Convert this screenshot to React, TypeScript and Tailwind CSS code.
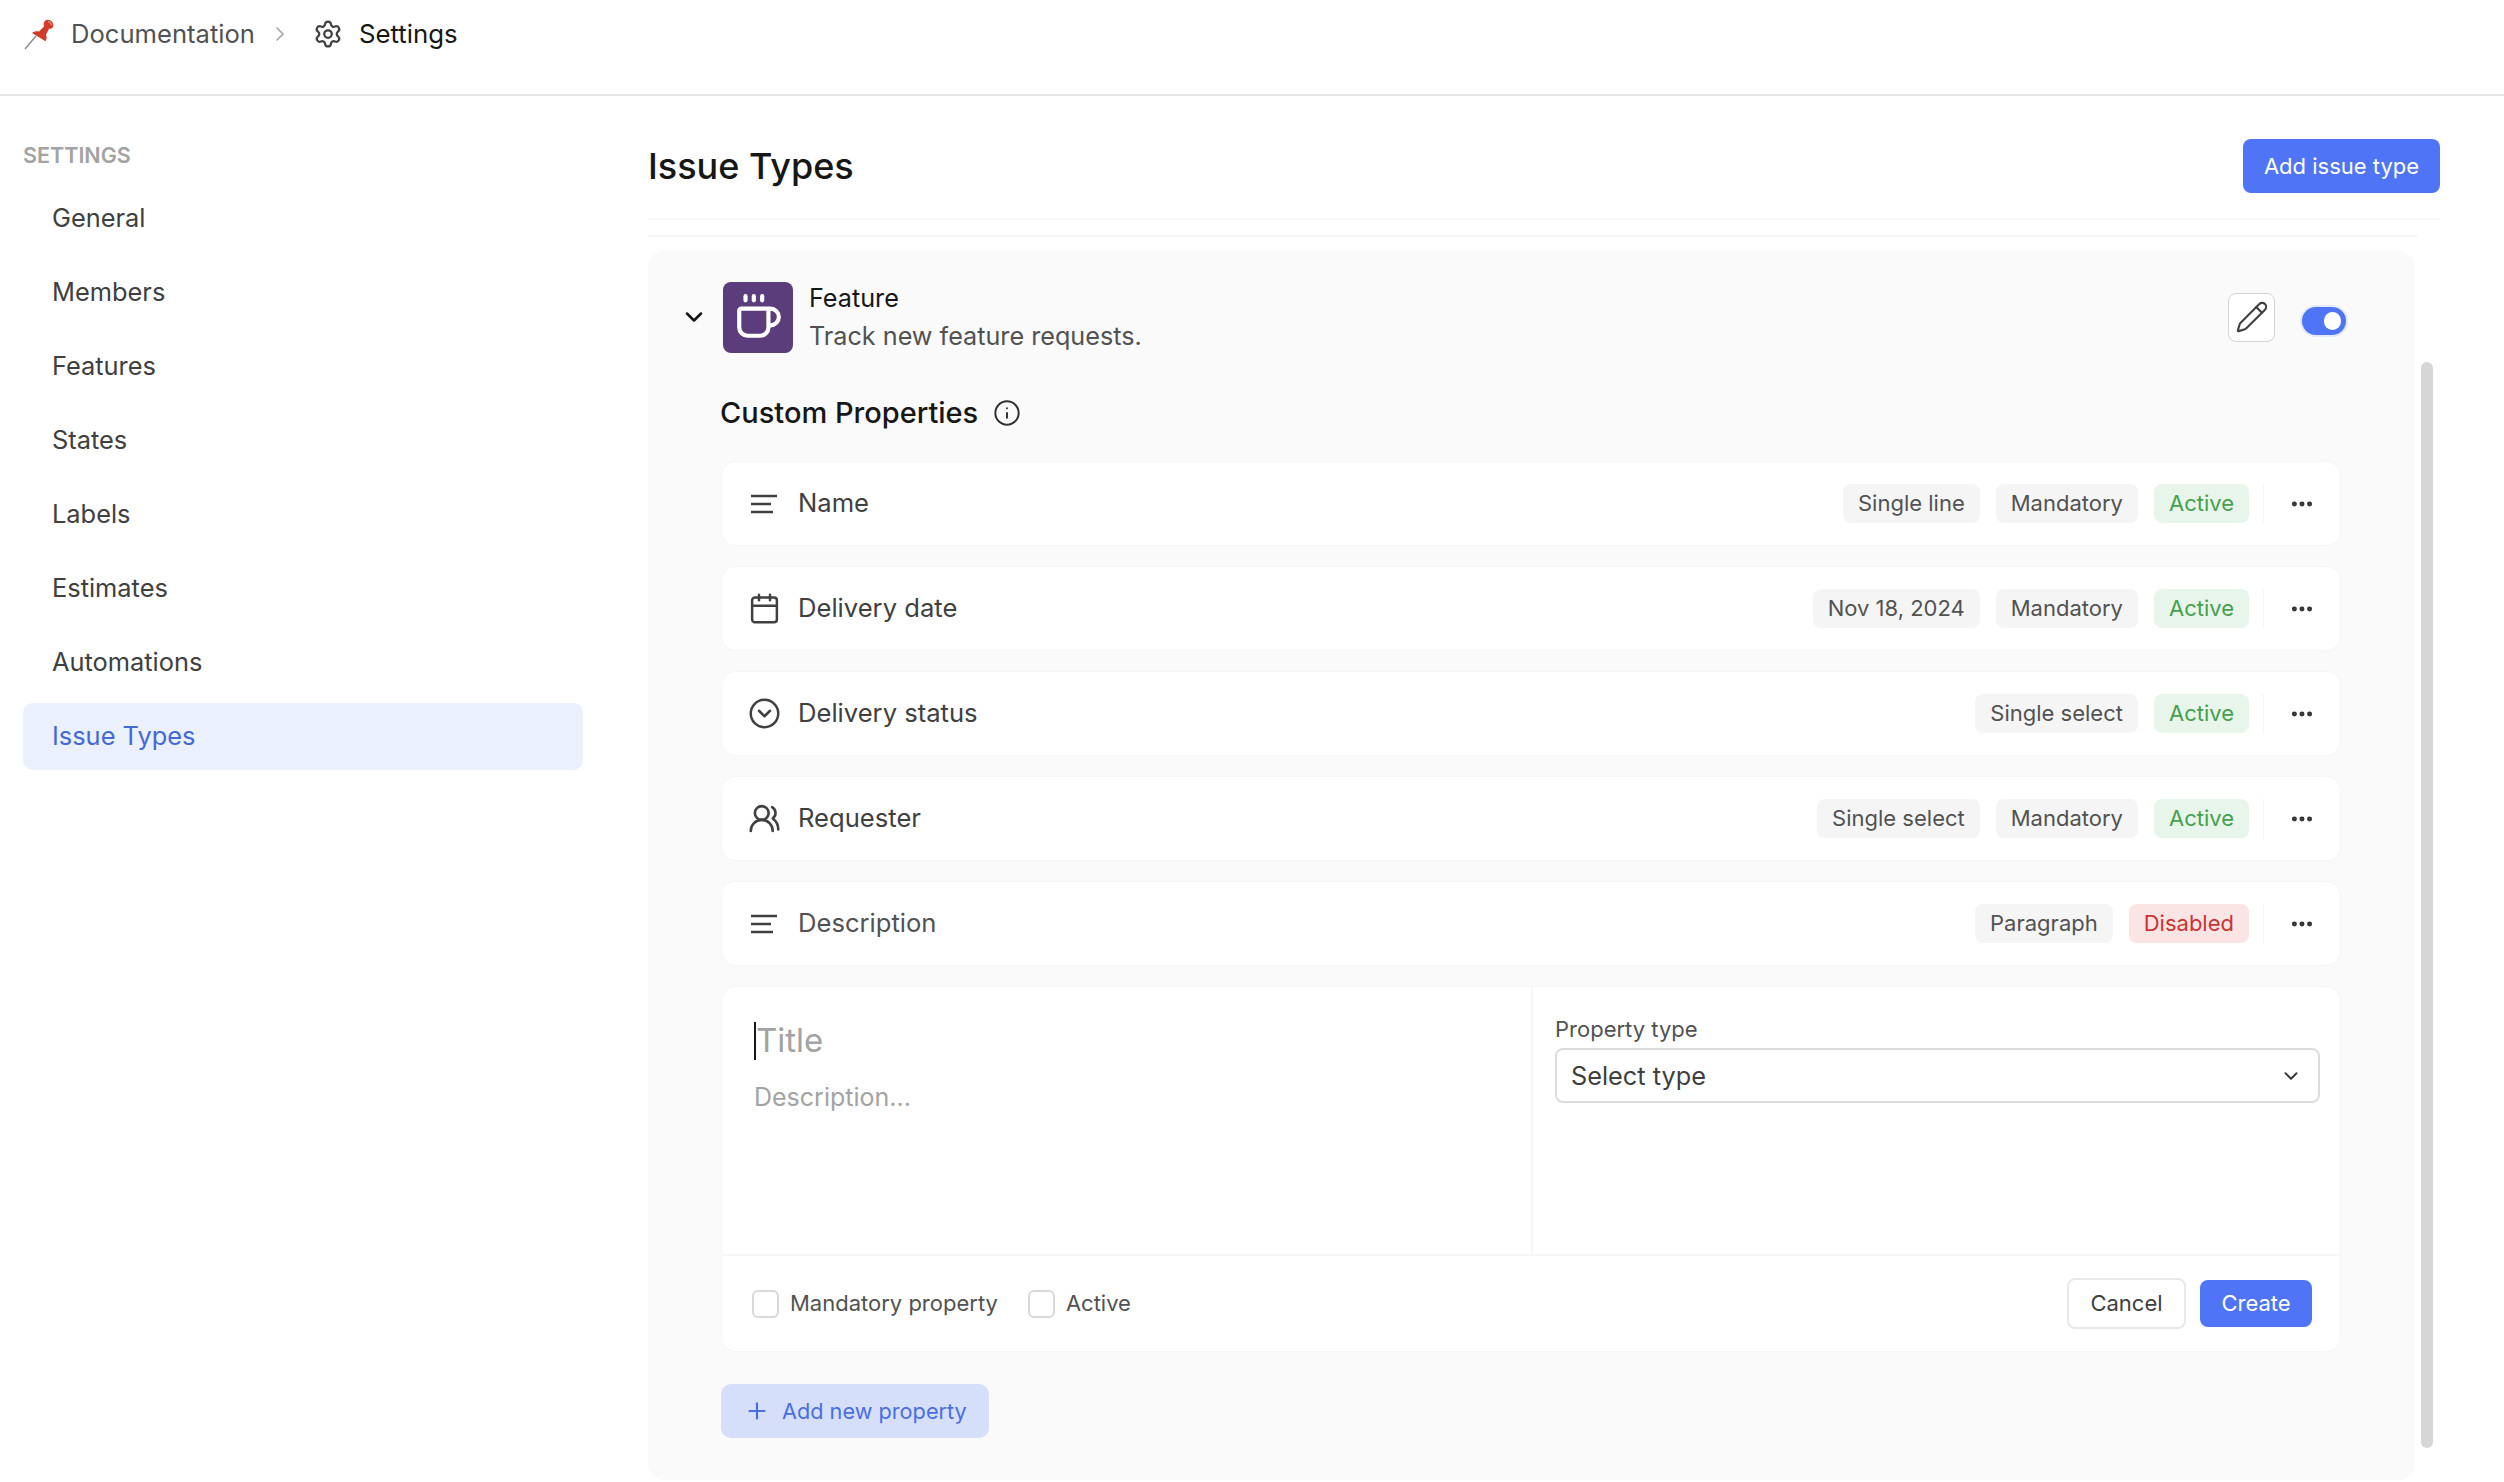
import type { ReactNode } from 'react'
import {
  Calendar,
  ChevronDown,
  ChevronRight,
  CircleChevronDown,
  Coffee,
  Ellipsis,
  Info,
  Pencil,
  Plus,
  Settings,
  UsersRound,
} from 'lucide-react'

const navItems = ['General', 'Members', 'Features', 'States', 'Labels', 'Estimates', 'Automations', 'Issue Types']

function LinesIcon() {
  return (
    <svg width="28" height="20" viewBox="0 0 28 20" fill="none" stroke="#404040" strokeWidth="2.4">
      <path d="M1 2h26M1 10h20M1 18h22" />
    </svg>
  )
}

function PinIcon() {
  return (
    <svg width="32" height="32" viewBox="0 0 32 32" className="shrink-0">
      <path d="M1 31 12 18" stroke="#8a8a8a" strokeWidth="1.4" />
      <path d="M20 4.500c1-2.500 4-3.500 6.500-2 2.500 1.500 3.500 4 2.500 6.500-.8 1.500-2.500 2-4 1.800l-3 6c1 2 .8 4.500-.5 6.500L8 15c2-1.700 4.500-2.200 7-1.500l5-5c-.5-1.500-.5-2.800 0-4Z" fill="#d13b2e" />
      <path d="M24 3.500c2 .5 3.500 2 3.500 4" stroke="#e9806f" strokeWidth="1.400" fill="none" />
    </svg>
  )
}

function Chip({ label, tone = 'gray' }: { label: string; tone?: 'gray' | 'green' | 'red' }) {
  const toneClass =
    tone === 'green'
      ? 'bg-[#e8f5ea] text-[#46a04e]'
      : tone === 'red'
        ? 'bg-[#fae5e4] text-[#c93434]'
        : 'bg-[#f5f5f5] text-[#525252]'
  return (
    <span className={`flex h-[39px] items-center rounded-[8px] px-[15px] text-[22px] ${toneClass}`}>
      {label}
    </span>
  )
}

function PropertyRow({
  icon,
  name,
  chips,
  muted,
}: {
  icon: ReactNode
  name: string
  chips: ReactNode
  muted?: boolean
}) {
  return (
    <div className="flex h-[85px] items-center rounded-[14px] border border-[#f6f6f6] bg-white pl-[28px] pr-[25px]">
      <span className="flex h-[36px] w-[28px] shrink-0 items-center justify-center">{icon}</span>
      <span className={`ml-[20px] text-[25.6px] ${muted ? 'text-[#525252]' : 'text-[#404040]'}`}>{name}</span>
      <div className="ml-auto flex items-center gap-[16px]">{chips}</div>
      <div className="ml-[14px] h-[39px] border-l border-[#f5f5f5]" />
      <Ellipsis size={26} strokeWidth={2.6} className="ml-[25px] text-[#333333]" />
    </div>
  )
}

function Checkbox({ label }: { label: string }) {
  return (
    <label className="flex items-center gap-[11px] text-[22px] text-[#525252]">
      <span className="h-[28px] w-[27px] rounded-[6px] border-2 border-[#d9d9d9] bg-white" />
      {label}
    </label>
  )
}

export default function App() {
  return (
    <div className="h-[1482px] w-[2504px] overflow-hidden bg-white [font-family:Inter,sans-serif]">
      <header className="flex h-[96px] items-start border-b-2 border-[#e5e5e5] pl-[24px] pt-[18px]">
        <PinIcon />
        <span className="ml-[15px] text-[25.6px] leading-[32px] text-[#525252]">Documentation</span>
        <ChevronRight size={24} strokeWidth={1.6} className="ml-[13px] mt-[4px] text-[#a3a3a3]" />
        <Settings size={30} strokeWidth={1.8} className="ml-[21px] mt-[1px] text-[#404040]" />
        <span className="ml-[16px] text-[25.8px] leading-[32px] text-[#171717]">Settings</span>
      </header>

      <div className="flex">
        <aside className="w-[648px] shrink-0 pl-[23px] pt-[47px]">
          <div className="text-[21.5px] font-semibold leading-[24px] text-[#a3a3a3]">SETTINGS</div>
          <nav className="mt-[18px] flex w-[560px] flex-col gap-[7px]">
            {navItems.map((item) => (
              <a
                key={item}
                className={`flex h-[67px] items-center rounded-[10px] pl-[29px] text-[25.4px] ${
                  item === 'Issue Types' ? 'bg-[#eaf0fc] text-[#4568d6]' : 'text-[#404040]'
                }`}
              >
                {item}
              </a>
            ))}
          </nav>
        </aside>

        <main className="w-[1792px] pt-[43px]">
          <div className="flex items-center justify-between border-b-2 border-[#f7f7f7] pb-[25px]">
            <h1 className="text-[36px] font-medium text-[#171717]">Issue Types</h1>
            <button className="h-[54px] w-[197px] rounded-[8px] bg-[#4f75f6] text-[22px] text-white">
              Add issue type
            </button>
          </div>
          <div className="mt-[15px] w-[1769px] border-t-2 border-[#f7f7f7]" />

          <section className="relative mt-[14px] w-[1767px] rounded-[16px] bg-[#fafafa] pb-[42px] pt-[28px]">
            <div className="flex items-center pl-[32px] pr-[69px]">
              <ChevronDown size={28} strokeWidth={2.2} className="text-[#171717]" />
              <div className="ml-[15px] flex h-[71px] w-[70px] items-center justify-center rounded-[8px] bg-[#5a3d7a]">
                <Coffee size={50} strokeWidth={2} className="text-white" />
              </div>
              <div className="ml-[16px]">
                <div className="text-[25.2px] leading-[38px] text-[#171717]">Feature</div>
                <div className="text-[25.2px] leading-[38px] text-[#525252]">Track new feature requests.</div>
              </div>
              <button className="ml-auto flex h-[49px] w-[47px] items-center justify-center rounded-[8px] border border-[#d4d4d4] bg-white">
                <Pencil size={34} strokeWidth={1.5} className="text-[#404040]" />
              </button>
              <div className="ml-[27px] mt-[7px] flex h-[28px] w-[44px] items-center justify-end rounded-full bg-[#4f75f6] pr-[5px] ring-2 ring-[#e3e9fb]">
                <span className="h-[18px] w-[17px] rounded-full bg-white" />
              </div>
            </div>

            <div className="pl-[73px] pr-[74px]">
              <div className="-ml-[1px] mt-[40px] flex h-[36px] items-center text-[#171717]">
                <span className="text-[29px] font-medium">Custom Properties</span>
                <Info size={28} strokeWidth={1.7} className="ml-[15px] text-[#333333]" />
              </div>

              <div className="mt-[30px] flex flex-col gap-[20px]">
                <PropertyRow
                  icon={<LinesIcon />}
                  name="Name"
                  chips={
                    <>
                      <Chip label="Single line" />
                      <Chip label="Mandatory" />
                      <Chip label="Active" tone="green" />
                    </>
                  }
                />
                <PropertyRow
                  icon={<Calendar size={33} strokeWidth={1.8} className="max-w-none shrink-0 text-[#404040]" />}
                  name="Delivery date"
                  chips={
                    <>
                      <Chip label="Nov 18, 2024" />
                      <Chip label="Mandatory" />
                      <Chip label="Active" tone="green" />
                    </>
                  }
                />
                <PropertyRow
                  icon={<CircleChevronDown size={33} strokeWidth={1.8} className="max-w-none shrink-0 text-[#404040]" />}
                  name="Delivery status"
                  chips={
                    <>
                      <Chip label="Single select" />
                      <Chip label="Active" tone="green" />
                    </>
                  }
                />
                <PropertyRow
                  icon={<UsersRound size={33} strokeWidth={1.9} className="max-w-none shrink-0 text-[#404040]" />}
                  name="Requester"
                  chips={
                    <>
                      <Chip label="Single select" />
                      <Chip label="Mandatory" />
                      <Chip label="Active" tone="green" />
                    </>
                  }
                />
                <PropertyRow
                  icon={<LinesIcon />}
                  name="Description"
                  muted
                  chips={
                    <>
                      <Chip label="Paragraph" />
                      <Chip label="Disabled" tone="red" />
                    </>
                  }
                />

                <div className="h-[366px] rounded-[14px] border border-[#f6f6f6] bg-white">
                  <div className="flex h-[269px] border-b-2 border-[#f7f7f7]">
                    <div className="w-[811px] border-r-2 border-[#f7f7f7] pl-[32px] pt-[32px]">
                      <div className="flex h-[44px] items-center">
                        <span className="h-[38px] w-[2px] bg-[#171717]" />
                        <span className="text-[33px] text-[#a3a3a3]">Title</span>
                      </div>
                      <div className="mt-[16px] text-[25px] text-[#a3a3a3]">Description...</div>
                    </div>
                    <div className="flex-1 pl-[22px] pr-[20px] pt-[29px]">
                      <div className="text-[22px] leading-[26px] text-[#525252]">Property type</div>
                      <div className="mt-[6px] flex h-[55px] items-center justify-between rounded-[8px] border-2 border-[#dcdcdc] pl-[14px] pr-[16px] text-[25.3px] text-[#404040]">
                        Select type
                        <ChevronDown size={22} strokeWidth={2} className="text-[#333333]" />
                      </div>
                    </div>
                  </div>
                  <div className="flex h-[95px] items-center pl-[30px] pr-[28px]">
                    <div className="flex items-center gap-[30px]">
                      <Checkbox label="Mandatory property" />
                      <Checkbox label="Active" />
                    </div>
                    <button className="ml-auto h-[51px] w-[119px] rounded-[8px] border-2 border-[#e8e8e8] bg-white text-[22px] text-[#404040]">
                      Cancel
                    </button>
                    <button className="ml-[14px] h-[47px] w-[112px] rounded-[8px] bg-[#4f75f6] text-[22px] text-white">
                      Create
                    </button>
                  </div>
                </div>
              </div>

              <button className="mt-[32px] flex h-[54px] w-[268px] items-center rounded-[10px] bg-[#d5dffa] pl-[23px] text-[21.7px] text-[#4a6ee0]">
                <Plus size={26} strokeWidth={2} />
                <span className="ml-[12px]">Add new property</span>
              </button>
            </div>

            <div className="absolute -right-[18px] bottom-[32px] top-[111px] w-[12px] rounded-full bg-[#d6d6d6]" />
          </section>
        </main>
      </div>
    </div>
  )
}
